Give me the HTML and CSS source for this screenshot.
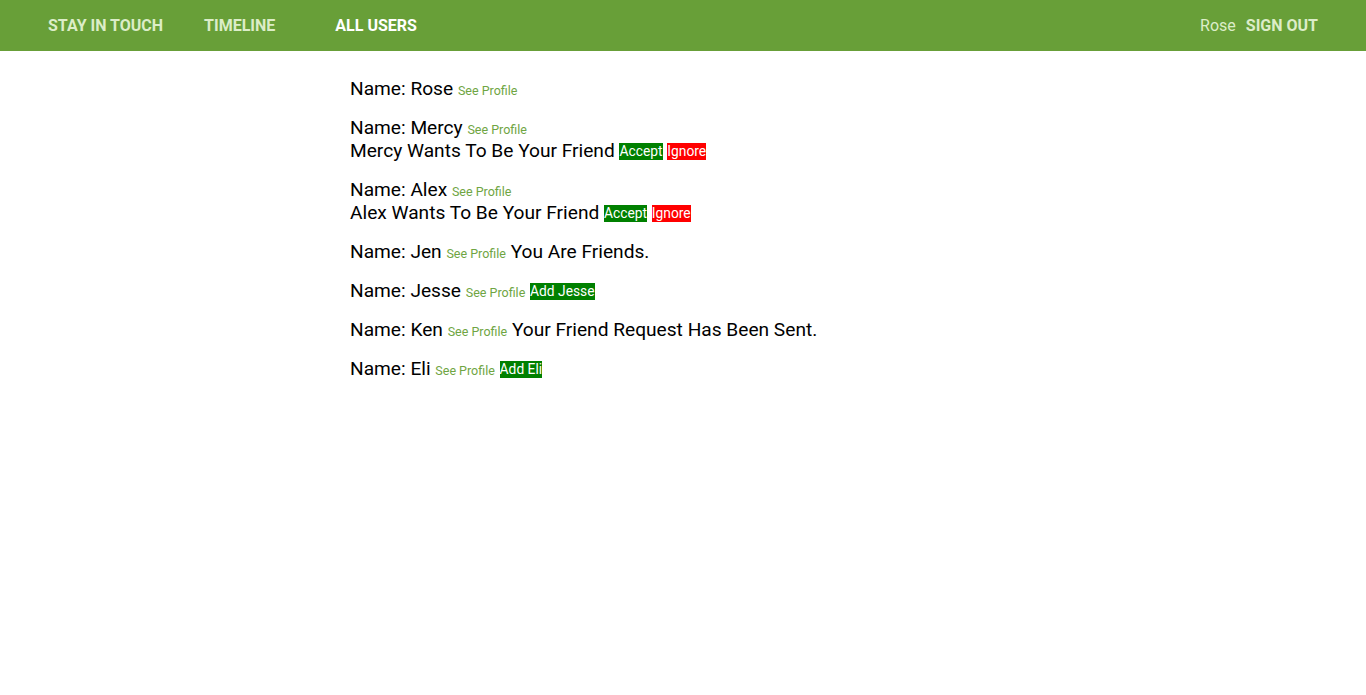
FILE: index.html
```html
<!DOCTYPE html>
<html>
<head>
<meta charset="utf-8">
<link rel="stylesheet" href="styles.css">
</head>
<body>
<nav class="navbar">
  <div class="nav-left">
    <a class="nav-link brand" href="#">STAY IN TOUCH</a>
    <a class="nav-link timeline" href="#">TIMELINE</a>
    <a class="nav-link active" href="#">ALL USERS</a>
  </div>
  <div class="nav-right">
    <span class="nav-user">Rose</span>
    <a class="nav-link" href="#">SIGN OUT</a>
  </div>
</nav>
<main class="users">
  <div class="user">
    <div class="line">Name: Rose <a class="profile" href="#">See Profile</a></div>
  </div>
  <div class="user">
    <div class="line">Name: Mercy <a class="profile" href="#">See Profile</a></div>
    <div class="line">Mercy Wants To Be Your Friend <button class="btn accept">Accept</button> <button class="btn ignore">Ignore</button></div>
  </div>
  <div class="user">
    <div class="line">Name: Alex <a class="profile" href="#">See Profile</a></div>
    <div class="line">Alex Wants To Be Your Friend <button class="btn accept">Accept</button> <button class="btn ignore">Ignore</button></div>
  </div>
  <div class="user">
    <div class="line">Name: Jen <a class="profile" href="#">See Profile</a> You Are Friends.</div>
  </div>
  <div class="user">
    <div class="line">Name: Jesse <a class="profile" href="#">See Profile</a> <button class="btn accept">Add Jesse</button></div>
  </div>
  <div class="user">
    <div class="line">Name: Ken <a class="profile" href="#">See Profile</a> Your Friend Request Has Been Sent.</div>
  </div>
  <div class="user">
    <div class="line">Name: Eli <a class="profile" href="#">See Profile</a> <button class="btn accept">Add Eli</button></div>
  </div>
</main>
</body>
</html>
```

FILE: styles.css
```css
body {
  margin: 0;
  font-family: Roboto, "Liberation Sans", sans-serif;
  background: #fff;
  color: #000;
}
.navbar {
  height: 51px;
  background: #689f38;
  display: flex;
  align-items: center;
  justify-content: space-between;
  padding: 0 48px;
}
.nav-left, .nav-right {
  display: flex;
  align-items: center;
}
.nav-link {
  font-weight: 700;
  font-size: 16px;
  color: #dcedc8;
  text-decoration: none;
}
.brand { margin-right: 41px; }
.timeline { margin-right: 60px; }
.active { color: #fff; }
.nav-user {
  font-size: 16px;
  color: #dcedc8;
  margin-right: 10px;
}
.users {
  width: 666px;
  margin: 26px auto 0;
}
.user {
  margin-bottom: 16px;
}
.line {
  font-size: 19.15px;
  line-height: 23px;
  height: 23px;
  white-space: nowrap;
}
.profile {
  font-size: 12.5px;
  line-height: 1;
  color: #6fa543;
  text-decoration: none;
}
.btn {
  font-family: Roboto, "Liberation Sans", sans-serif;
  font-size: 13.8px;
  line-height: 17px;
  color: #fff;
  border: 0;
  padding: 0;
  margin: 0;
  vertical-align: 1px;
}
.accept { background: #008000; }
.ignore { background: #ff0000; }
```
